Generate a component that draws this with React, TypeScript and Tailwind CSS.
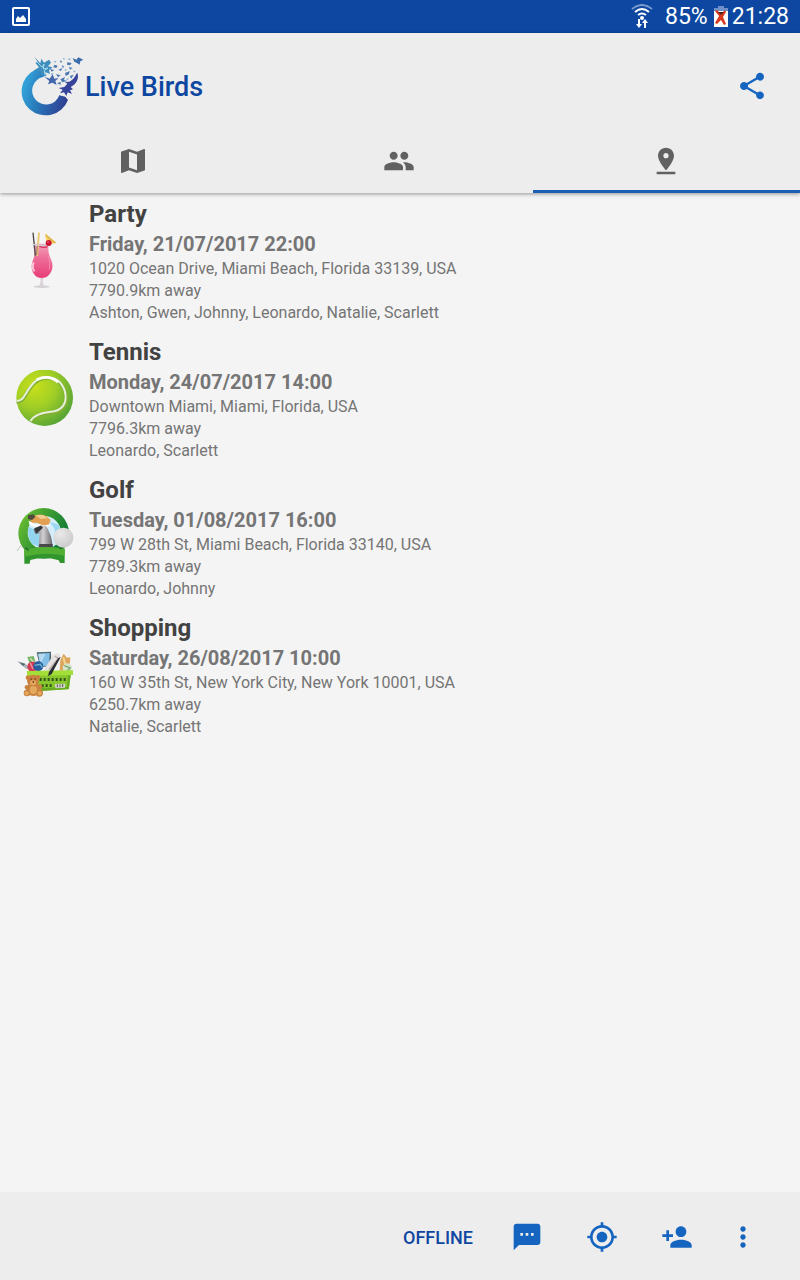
import { useState, type ReactNode } from 'react';

type EventItem = {
  title: string;
  date: string;
  place: string;
  distance: string;
  people: string;
  image: ReactNode;
};

const Icon = ({ d }: { d: string }) => (
  <svg viewBox="0 0 24 24" className="size-8 fill-current" aria-hidden="true">
    <path d={d} />
  </svg>
);

const icons = {
  share:
    'M18 16.08c-.76 0-1.44.3-1.96.77L8.91 12.7c.05-.23.09-.46.09-.7s-.04-.47-.09-.7l7.05-4.11c.54.5 1.25.81 2.04.81 1.66 0 3-1.34 3-3s-1.34-3-3-3-3 1.34-3 3c0 .24.04.47.09.7L8.04 9.81C7.5 9.31 6.79 9 6 9c-1.66 0-3 1.34-3 3s1.34 3 3 3c.79 0 1.5-.31 2.04-.81l7.12 4.16c-.05.21-.08.43-.08.65 0 1.61 1.31 2.92 2.92 2.92s2.92-1.31 2.92-2.92-1.31-2.92-2.92-2.92z',
  map: 'M20.5 3l-.16.03L15 5.1 9 3 3.36 4.9c-.21.07-.36.25-.36.48V20.5c0 .28.22.5.5.5l.16-.03L9 18.9l6 2.1 5.64-1.9c.21-.07.36-.25.36-.48V3.5c0-.28-.22-.5-.5-.5zM15 19l-6-2.11V5l6 2.11V19z',
  people:
    'M16 11c1.66 0 2.99-1.34 2.99-3S17.66 5 16 5c-1.66 0-3 1.34-3 3s1.34 3 3 3zm-8 0c1.66 0 2.99-1.34 2.99-3S9.66 5 8 5C6.34 5 5 6.34 5 8s1.34 3 3 3zm0 2c-2.33 0-7 1.17-7 3.5V19h14v-2.5c0-2.33-4.67-3.5-7-3.5zm8 0c-.29 0-.62.02-.97.05 1.16.84 1.97 1.97 1.97 3.45V19h6v-2.5c0-2.33-4.67-3.5-7-3.5z',
  pin: 'M18 8c0-3.31-2.69-6-6-6S6 4.69 6 8c0 4.5 6 11 6 11s6-6.5 6-11zm-8 0c0-1.1.9-2 2-2s2 .9 2 2-.89 2-2 2c-1.1 0-2-.9-2-2zM5 20v2h14v-2H5z',
  chat: 'M20 2H4c-1.1 0-1.99.9-1.99 2L2 22l4-4h14c1.1 0 2-.9 2-2V4c0-1.1-.9-2-2-2zM9 11H7V9h2v2zm4 0h-2V9h2v2zm4 0h-2V9h2v2z',
  locate:
    'M12 8c-2.21 0-4 1.79-4 4s1.79 4 4 4 4-1.79 4-4-1.79-4-4-4zm8.94 3c-.46-4.17-3.77-7.48-7.94-7.94V1h-2v2.06C6.83 3.52 3.52 6.83 3.06 11H1v2h2.06c.46 4.17 3.77 7.48 7.94 7.94V23h2v-2.06c4.17-.46 7.48-3.77 7.94-7.94H23v-2h-2.06zM12 19c-3.87 0-7-3.13-7-7s3.13-7 7-7 7 3.13 7 7-3.13 7-7 7z',
  addPerson:
    'M15 12c2.21 0 4-1.79 4-4s-1.79-4-4-4-4 1.79-4 4 1.79 4 4 4zm-9-2V7H4v3H1v2h3v3h2v-3h3v-2H6zm9 4c-2.67 0-8 1.34-8 4v2h16v-2c0-2.66-5.33-4-8-4z',
  more: 'M12 8c1.1 0 2-.9 2-2s-.9-2-2-2-2 .9-2 2 .9 2 2 2zm0 2c-1.1 0-2 .9-2 2s.9 2 2 2 2-.9 2-2-.9-2-2-2zm0 6c-1.1 0-2 .9-2 2s.9 2 2 2 2-.9 2-2-.9-2-2-2z',
};

const Logo = () => (
  <svg viewBox="60 163 195 189" className="h-[63px] w-[65px]" aria-hidden="true">
    <defs>
      <linearGradient id="ring" x1="0" y1="0.3" x2="1" y2="0.6">
        <stop offset="0" stopColor="#35a9dd" />
        <stop offset="0.45" stopColor="#2877b9" />
        <stop offset="1" stopColor="#303f93" />
      </linearGradient>
    </defs>
    <path
      d="M104 208A72 72 0 1 0 204 298L196 288L178 284A42 42 0 1 1 128 229L140 224L126 206Z"
      fill="url(#ring)"
    />
    <path d="M103 168l18 20 3-14 8 12 15-9 6 9-9 11 14 3-11 8 3 12-13-5-11 12-6-14-16-5 13-8-11-14 7-2z" fill="#3d8dbd" />
    <path d="M112 184l14 16 6-10-2 15 14-3-11 8 2 14" fill="none" stroke="#a9dcef" strokeWidth="3" />
    <path d="M218 172l11 5 6-7 15 7-9 5-2 10-8-5-8-4z" fill="#3d6cab" />
    <path d="M232 216c6 18-3 34-20 43l7 7-9 3 6 11-13-5-4 11-7-11-12 3 8-11-12-5 17-3 9-10-7-5 13-1c10-5 17-13 21-23z" fill="#36439a" />
    <path d="M133 228l16 6 9-13 5 13 13-2-10 9 4 12-13-7-13 5 4-10z" fill="#4466ac" />
    <path d="M163 192l10 3-4 7-9-2zM180 178l7 5-5 4zM150 205l13 3-8 5zM175 207l12-5-4 9zM195 217l14-6-2 10-10 5zM202 185l13 2-5 7-9-2zM207 199l11 3-8 5zM193 198l-7-5 2 9zM168 220l14 4-8 6zM181 236l14-7-3 9 10 3-15 4zM209 226l12-4-7 12zM171 247l12-3-2 9z" fill="#4b79b4" />
    <path d="M160 183l9-3-2 6zM188 171l8 3-5 3zM211 179l-9-4 9-2zM155 216l7 4-9 3zM193 207l8-1-5 6zM220 209l7 3-5 4zM198 235l9-2-4 6z" fill="#7fb0d2" />
  </svg>
);

const Cocktail = () => (
  <svg viewBox="48 36 174 174" className="size-[58px]" role="img" aria-label="Cocktail">
    <defs>
      <linearGradient id="drink" x1="0" y1="0" x2="0" y2="1">
        <stop offset="0" stopColor="#f3a3bb" />
        <stop offset="0.4" stopColor="#ee6f99" />
        <stop offset="1" stopColor="#e83d78" />
      </linearGradient>
    </defs>
    <path d="M136 41l33 27-29 8z" fill="#f7d264" />
    <path d="M136 41l33 27-7 2-25-21z" fill="#e0b54e" />
    <ellipse cx="125" cy="200" rx="24" ry="4" fill="#cfd0d3" />
    <path d="M121 172h9l-2 13 4 14h-14l4-14z" fill="#d8d2d8" />
    <path d="M99 71h46c-1 20 1 32 7 45 8 17 7 34-3 46-7 9-15 12-24 12s-17-3-23-12c-9-12-9-28-2-44 6-13 3-29-1-47z" fill="url(#drink)" />
    <path d="M99 38l7 69" stroke="#514b48" strokeWidth="4" />
    <path d="M117 38l-6 70" stroke="#ecca78" strokeWidth="6" />
    <path d="M112 76l-2 30" stroke="#9e766a" strokeWidth="3" />
    <path d="M98 73q24 6 45 0" stroke="#c9d6d9" strokeWidth="4" fill="none" />
    <path d="M118 79q14 6 24 1" stroke="#d53058" strokeWidth="4" fill="none" />
    <circle cx="146" cy="69" r="9" fill="#cc1433" />
    <circle cx="144" cy="66" r="2" fill="#fb899c" />
    <path d="M101 127q-7 18 3 27" stroke="#fbc7d7" strokeWidth="6" fill="none" />
    <path d="M144 106q10 20 4 43" stroke="#f58fb2" strokeWidth="3" fill="none" />
  </svg>
);

const TennisBall = () => (
  <svg viewBox="48 30 174 174" className="size-[58px]" role="img" aria-label="Tennis ball">
    <defs>
      <radialGradient id="felt" cx="0.32" cy="0.3" r="0.75">
        <stop offset="0" stopColor="#c8e01b" />
        <stop offset="0.5" stopColor="#a0ce26" />
        <stop offset="1" stopColor="#58a535" />
      </radialGradient>
    </defs>
    <circle cx="134" cy="113" r="85" fill="url(#felt)" />
    <g fill="none">
      <path d="M50 126c17-1 20-10 31-28 15-24 30-42 56-44 30-2 50 16 58 40 10 32-2 57-31 64-27 5-56 4-73 25" stroke="#7fb035" strokeWidth="11" />
      <path d="M50 123c17-1 20-10 31-28 15-24 30-42 56-43 30-1 49 16 57 40 9 31-3 55-31 62-27 5-54 4-72 29" stroke="#e9efdb" strokeWidth="6" />
      <path d="M110 59q38-17 64 8" stroke="#fff" strokeWidth="8" />
    </g>
  </svg>
);

const GolfBadge = () => (
  <svg viewBox="48 39 174 174" className="size-[58px]" role="img" aria-label="Golf">
    <defs>
      <linearGradient id="badge" x1="0" y1="0" x2="1" y2="0.6">
        <stop offset="0" stopColor="#79c632" />
        <stop offset="0.5" stopColor="#3b9c32" />
        <stop offset="1" stopColor="#087337" />
      </linearGradient>
      <linearGradient id="shirt">
        <stop offset="0" stopColor="#5d5d60" />
        <stop offset="0.5" stopColor="#d2d0d2" />
        <stop offset="1" stopColor="#646266" />
      </linearGradient>
      <radialGradient id="golfball" cx="0.35" cy="0.3" r="0.8">
        <stop offset="0" stopColor="#e9e9e9" />
        <stop offset="1" stopColor="#c9c9ca" />
      </radialGradient>
    </defs>
    <circle cx="131" cy="115" r="76" fill="url(#badge)" />
    <circle cx="133" cy="113" r="50" fill="#d3eef9" />
    <path d="M86 95q-7 28 10 51l23 9v-43z" fill="#93d4ef" />
    <path d="M150 80l14 22 2 42 17-30-6-24z" fill="#9bd7f0" />
    <path d="M86 77l24 12 22-6 20 8-22 8-25-4-17-6z" fill="#fff" />
    <path d="M104 62q20-8 36 2l12 11-6 14-18 2-18-8-12 1-8-8z" fill="#e2a052" />
    <path d="M84 61l16-3 6 8-10 9-12-3z" fill="#51483e" />
    <path d="M106 60l24 0 14 10-22 2z" fill="#f0cd93" />
    <path d="M121 91l17 1q18 27 20 64h-42l3-41-13 2-5-14z" fill="url(#shirt)" />
    <path d="M103 100l20-8 6 6-20 18z" fill="#353639" />
    <path d="M118 147h40v10h-42z" fill="#49494d" />
    <path d="M64 150l-13 18" stroke="#c2c5c4" strokeWidth="3" />
    <path d="M73 164q58-15 121-3v43h-14l-4-8q-43-13-85-1l-2 11H73z" fill="#31952d" />
    <path d="M73 164q58-15 121-3v21q-59-13-121 3z" fill="#50ae32" />
    <path d="M76 158l10 8M180 162l10-8" stroke="#216c28" strokeWidth="5" />
    <circle cx="190" cy="128" r="30" fill="url(#golfball)" />
  </svg>
);

const Basket = () => (
  <svg viewBox="48 33 174 174" className="size-[58px]" role="img" aria-label="Shopping basket">
    <path d="M51 79l22 5 25 20-20-3z" fill="#abb4b6" />
    <path d="M58 82l18 5-7 6z" fill="#4f6b73" />
    <path d="M82 66l19-3 7 22-18 5z" fill="#78b765" />
    <path d="M91 70l12 14" stroke="#e4e0d0" strokeWidth="4" />
    <circle cx="97" cy="95" r="15" fill="#d33855" />
    <path d="M91 84l8 18" stroke="#f09aa9" strokeWidth="4" />
    <path d="M110 52l43-2 1 43-34 4z" fill="#51666f" />
    <path d="M114 56l35-2-2 38-26 2z" fill="#83bee7" />
    <path d="M115 57l22-1-16 32z" fill="#b5daf2" />
    <circle cx="115" cy="94" r="15" fill="#285d9d" />
    <path d="M104 91l17-3 6 10" stroke="#72b6d1" strokeWidth="4" fill="none" />
    <path d="M160 59l17-5 6 14-37 44-17-3z" fill="#e5e2e1" />
    <path d="M164 63l11 7-28 34" stroke="#b9a7a4" strokeWidth="4" fill="none" />
    <path d="M181 75l10-19 10 12 10-1-3 37-29 4z" fill="#dda45e" />
    <path d="M190 67l9 34" stroke="#f2d592" strokeWidth="6" />
    <circle cx="202" cy="99" r="14" fill="#d7e3c8" />
    <path d="M193 92l17 7-8 8" stroke="#6eaa6e" strokeWidth="4" fill="none" />
    <path d="M83 112h130l-6 51-87 5z" fill="#87c62c" />
    <path d="M80 108l139-2v14l-137 3z" fill="#a4df39" />
    <path d="M204 121h8l-6 41-86 6v-8l81-5z" fill="#69aa22" />
    <path d="M122 129v9M134 129v9M146 129v9M158 129v9M170 129v9M182 129v9M194 129v9M128 148v9M140 147v9M152 147v9" stroke="#34551b" strokeWidth="6" />
    <path d="M165 147l31-1-1 12-29 2z" fill="#d4d8cb" />
    <path d="M172 148v9M180 148v9M188 147v9" stroke="#53564d" strokeWidth="3" />
    <path d="M175 69l7-3-27 51-11 7 3-13z" fill="#292c30" />
    <g fill="#c9833f">
      <circle cx="84" cy="128" r="7" />
      <circle cx="114" cy="127" r="7" />
      <circle cx="99" cy="137" r="18" />
      <ellipse cx="100" cy="163" rx="21" ry="20" />
      <circle cx="81" cy="174" r="10" />
      <circle cx="118" cy="174" r="11" />
      <circle cx="81" cy="157" r="7" />
      <circle cx="120" cy="155" r="7" />
    </g>
    <g fill="#e5a95e">
      <ellipse cx="99" cy="143" rx="9" ry="7" />
      <ellipse cx="100" cy="165" rx="11" ry="12" />
      <circle cx="80" cy="175" r="6" />
      <circle cx="119" cy="175" r="6" />
    </g>
    <path d="M92 132h3M104 132h3M98 141h4" stroke="#4b2613" strokeWidth="4" />
  </svg>
);

const events: EventItem[] = [
  {
    title: 'Party',
    date: 'Friday, 21/07/2017 22:00',
    place: '1020 Ocean Drive, Miami Beach, Florida 33139, USA',
    distance: '7790.9km away',
    people: 'Ashton, Gwen, Johnny, Leonardo, Natalie, Scarlett',
    image: <Cocktail />,
  },
  {
    title: 'Tennis',
    date: 'Monday, 24/07/2017 14:00',
    place: 'Downtown Miami, Miami, Florida, USA',
    distance: '7796.3km away',
    people: 'Leonardo, Scarlett',
    image: <TennisBall />,
  },
  {
    title: 'Golf',
    date: 'Tuesday, 01/08/2017 16:00',
    place: '799 W 28th St, Miami Beach, Florida 33140, USA',
    distance: '7789.3km away',
    people: 'Leonardo, Johnny',
    image: <GolfBadge />,
  },
  {
    title: 'Shopping',
    date: 'Saturday, 26/08/2017 10:00',
    place: '160 W 35th St, New York City, New York 10001, USA',
    distance: '6250.7km away',
    people: 'Natalie, Scarlett',
    image: <Basket />,
  },
];

const tabs = [
  { label: 'Map', icon: icons.map },
  { label: 'Friends', icon: icons.people },
  { label: 'Places', icon: icons.pin },
];

const StatusBar = () => (
  <div className="flex h-[33px] items-center bg-[#0d47a1] px-[11px] pt-px text-[23px] text-white">
    <svg viewBox="0 0 20 20" className="size-5" aria-hidden="true">
      <rect x="2" y="1" width="16" height="17" rx="1" fill="none" stroke="#fff" strokeWidth="2" />
      <path d="M5 15v-3l2-3 2 2 3-3 3 4v3z" fill="#fff" />
    </svg>
    <svg viewBox="0 0 22 26" className="ml-auto h-[26px] w-[22px]" aria-hidden="true">
      <g fill="none" stroke="#fff" strokeWidth="2">
        <path d="M1 5q10-8 20 0" opacity="0.45" />
        <path d="M4 8q7-6 14 0" />
        <path d="M7 11q4-3 8 0" />
      </g>
      <circle cx="11" cy="14" r="2" fill="#fff" />
      <path d="M7 15h2v5h2l-3 4-3-4h2zM13 24h2v-5h2l-3-4-3 4h2z" fill="#fff" />
    </svg>
    <span className="ml-3">85%</span>
    <svg viewBox="0 0 14 22" className="mr-1 ml-[6px] h-[22px] w-[14px]" aria-hidden="true">
      <path d="M4 0h6v2h4v4H0V2h4z" fill="#6f8fca" />
      <path d="M0 5h14v16H0z" fill="#fff" />
      <path d="M3 4l4 4 4-4 1 2-3 5 3 7-2 1-3-5-4 4-2-1 4-7-4-5z" fill="#d8391f" />
      <path d="M4 6l3 3 3-3z" fill="#4b211b" />
    </svg>
    <span>21:28</span>
  </div>
);

export default function App() {
  const [active, setActive] = useState(2);

  return (
    <div className="flex min-h-screen flex-col bg-[#f4f4f4] font-[Roboto,sans-serif]">
      <StatusBar />

      {/* App bar */}
      <header className="relative bg-[#ededed] shadow-[0_1px_4px_rgba(0,0,0,0.4)]">
        <div className="flex h-[100px] items-center pt-[6px] pr-8 pl-5">
          <Logo />
          <h1 className="pt-[2px] text-[27px] font-medium text-[#0d47a1]">Live Birds</h1>
          <button className="ml-auto text-[#1565c0]" aria-label="Share">
            <Icon d={icons.share} />
          </button>
        </div>
        <nav className="grid h-[60px] grid-cols-3" role="tablist">
          {tabs.map((tab, i) => (
            <button
              key={tab.label}
              role="tab"
              aria-label={tab.label}
              aria-selected={i === active}
              onClick={() => setActive(i)}
              className={`flex items-center justify-center border-b-[3px] pr-px pb-[2px] text-[#616161] ${
                i === active ? 'border-[#1b5fb5]' : 'border-transparent'
              }`}
            >
              <Icon d={tab.icon} />
            </button>
          ))}
        </nav>
      </header>

      {/* Events */}
      <main className="flex-1 pt-[5px]">
        <ul className="flex flex-col gap-3">
          {events.map((event) => (
            <li key={event.title} className="flex items-center gap-[15px] px-4">
              {event.image}
              <div className="text-base leading-[22px] text-[#757575]">
                <h2 className="text-2xl leading-8 font-bold text-[#424242]">{event.title}</h2>
                <p className="text-xl leading-7 font-bold">{event.date}</p>
                <p>{event.place}</p>
                <p>{event.distance}</p>
                <p>{event.people}</p>
              </div>
            </li>
          ))}
        </ul>
      </main>

      {/* Bottom bar */}
      <footer className="flex h-[88px] items-center justify-end border-t border-[#efefef] bg-[#ededed] pr-7 text-[#1565c0]">
        <button className="px-4 pt-[2px] text-lg font-medium text-[#0d47a1]">OFFLINE</button>
        <button className="flex w-[75px] justify-center" aria-label="Messages">
          <Icon d={icons.chat} />
        </button>
        <button className="flex w-[75px] justify-center" aria-label="My location">
          <Icon d={icons.locate} />
        </button>
        <button className="flex w-[75px] justify-center" aria-label="Add friend">
          <Icon d={icons.addPerson} />
        </button>
        <button className="flex w-[58px] justify-center" aria-label="More options">
          <Icon d={icons.more} />
        </button>
      </footer>
    </div>
  );
}
